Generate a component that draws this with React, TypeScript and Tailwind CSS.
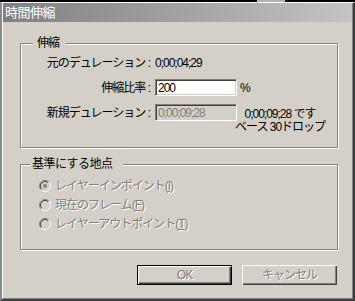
function Radio({ checked }: { checked?: boolean }) {
  return (
    <svg width="12" height="12" viewBox="0 0 12 12" className="shrink-0">
      <circle cx="6" cy="6" r="5" fill="#d4d0c8" />
      <path d="M2.11 9.89A5.5 5.5 0 0 1 9.89 2.11" fill="none" stroke="#808080" />
      <path d="M9.89 2.11A5.5 5.5 0 0 1 2.11 9.89" fill="none" stroke="#ffffff" />
      <path d="M2.82 9.18A4.5 4.5 0 0 1 9.18 2.82" fill="none" stroke="#404040" />
      <path d="M9.18 2.82A4.5 4.5 0 0 1 2.82 9.18" fill="none" stroke="#d4d0c8" />
      {checked && <circle cx="6" cy="6" r="2" fill="#808080" />}
    </svg>
  );
}

export default function App() {
  return (
    <div className="w-[355px] h-[301px] bg-black flex flex-col overflow-hidden font-['Liberation_Sans','Noto_Sans_CJK_JP',sans-serif] text-[12px] leading-[14px] tracking-[-1px] text-black">
      {/* strip behind the window */}
      <div className="h-[2px] flex shrink-0">
        <div className="w-[257px]" />
        <div className="w-[28px] bg-[#b4b4b4]" />
      </div>
      {/* WINDOW FRAME */}
      <div className="flex-1 min-h-0 border-l-2 border-t border-r-2 border-b-2 border-l-[#8a8a8a] border-t-white border-r-[#404040] border-b-[#404040]">
        <div className="h-full flex flex-col border-l border-r border-b border-l-white border-r-[#808080] border-b-[#808080]">
          {/* TITLE BAR */}
          <div className="h-[19px] shrink-0 flex items-center pl-[2px] bg-linear-to-r from-[#808080] to-[#c4c4c8] text-white text-[13px] tracking-[-0.5px]">
            時間伸縮
          </div>
          {/* BODY */}
          <div className="flex-1 bg-[#d4d0c8] pl-[17px] pt-[14px]">
            {/* GROUP 1 */}
            <fieldset className="w-[318px] h-[112px] p-0 border border-[#808080] shadow-[inset_1px_1px_0_#ffffff,1px_1px_0_#ffffff]">
              <legend className="ml-[12px] pl-[4px] pr-[7px] bg-[#d4d0c8]">伸縮</legend>
              <div className="pl-[19px] pt-[4px]">
                <div className="flex items-center h-[17px]">
                  <span className="w-[110px] text-right">元のデュレーション :</span>
                  <span className="ml-[5px]">0;00;04;29</span>
                </div>
                <div className="flex items-center mt-[8px]">
                  <span className="w-[110px] text-right">伸縮比率 :</span>
                  <input
                    value="200"
                    readOnly
                    className="ml-[5px] w-[82px] h-[17px] bg-white pl-[2px] outline-none border border-t-[#808080] border-l-[#808080] border-b-white border-r-white shadow-[inset_1px_1px_0_#404040,inset_-1px_-1px_0_#d4d0c8]"
                  />
                  <span className="ml-[3px]">%</span>
                </div>
                <div className="flex items-start mt-[8px]">
                  <span className="w-[110px] h-[17px] flex items-center justify-end">新規デュレーション :</span>
                  <input
                    value="0;00;09;28"
                    disabled
                    className="ml-[5px] w-[82px] h-[17px] bg-[#d4d0c8] text-[#808080] pl-[2px] outline-none border border-t-[#808080] border-l-[#808080] border-b-white border-r-white shadow-[inset_1px_1px_0_#404040,inset_-1px_-1px_0_#d4d0c8]"
                  />
                  <div className="w-[90px] -ml-[2px] mt-[4px] leading-[13px] text-center whitespace-nowrap">
                    <div>0;00;09;28 です</div>
                    <div>ベース 30ドロップ</div>
                  </div>
                </div>
              </div>
            </fieldset>
            {/* GROUP 2 */}
            <fieldset className="mt-[9px] w-[318px] h-[93px] p-0 border border-[#808080] shadow-[inset_1px_1px_0_#ffffff,1px_1px_0_#ffffff]">
              <legend className="ml-[9px] pl-[2px] pr-[10px] bg-[#d4d0c8] tracking-[-0.5px]">基準にする地点</legend>
              <div className="pl-[18px] pt-[5px] text-[#808080] [text-shadow:1px_1px_0_#ffffff]">
                <div className="flex items-center h-[19px]">
                  <Radio checked />
                  <span className="ml-[4px]">レイヤーインポイント(<u>I</u>)</span>
                </div>
                <div className="flex items-center h-[19px]">
                  <Radio />
                  <span className="ml-[4px]">現在のフレーム(<u>F</u>)</span>
                </div>
                <div className="flex items-center h-[19px]">
                  <Radio />
                  <span className="ml-[4px]">レイヤーアウトポイント(<u>T</u>)</span>
                </div>
              </div>
            </fieldset>
            {/* BUTTONS */}
            <div className="flex gap-[10px] pl-[117px] mt-[15px]">
              <button className="w-[95px] h-[20px] bg-[#d4d0c8] border border-black shadow-[inset_1px_1px_0_#ffffff,inset_-1px_-1px_0_#404040,inset_-2px_-2px_0_#808080] text-[#808080] [text-shadow:1px_1px_0_#ffffff]">
                OK
              </button>
              <button className="w-[95px] h-[20px] bg-[#d4d0c8] shadow-[inset_1px_1px_0_#ffffff,inset_-1px_-1px_0_#404040,inset_-2px_-2px_0_#808080] text-[#808080] [text-shadow:1px_1px_0_#ffffff]">
                キャンセル
              </button>
            </div>
          </div>
        </div>
      </div>
    </div>
  );
}
